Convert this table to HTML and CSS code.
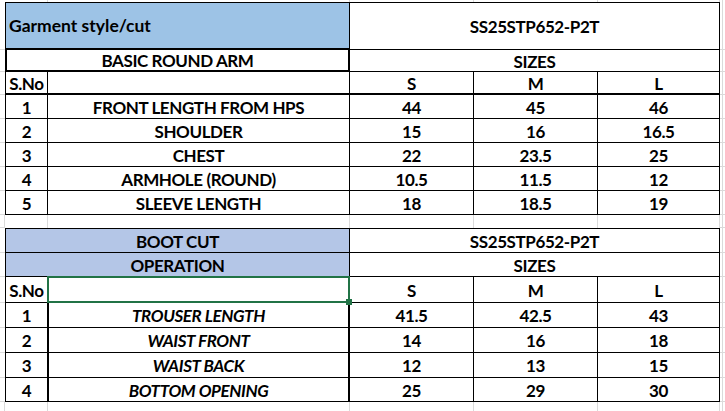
FILE: index.html
```html
<!DOCTYPE html>
<html lang="en">
<head>
<meta charset="utf-8">
<title>Garment spec sheet</title>
<link rel="stylesheet" href="styles.css">
</head>
<body>
<div class="sheet">
  <!-- row 0: top gridline strip -->
  <div class="gut first-row"></div>
  <div class="blank"></div><div class="blank"></div><div class="blank"></div><div class="blank"></div><div class="blank"></div>
  <div class="gut-r first-row"></div>

  <!-- row 1 -->
  <div class="gut"></div>
  <div class="cell span2 first topline hdr thick-b left">Garment style/cut</div>
  <div class="cell span3 topline">SS25STP652-P2T</div>
  <div class="gut-r"></div>

  <!-- row 2 -->
  <div class="gut"></div>
  <div class="cell span2 box">BASIC ROUND ARM</div>
  <div class="cell span3">SIZES</div>
  <div class="gut-r"></div>

  <!-- row 3 -->
  <div class="gut"></div>
  <div class="cell first thick-b">S.No</div>
  <div class="cell thick-b"></div>
  <div class="cell thick-b">S</div>
  <div class="cell thick-b">M</div>
  <div class="cell thick-b">L</div>
  <div class="gut-r"></div>

  <div class="gut"></div>
  <div class="cell first">1</div><div class="cell">FRONT LENGTH FROM HPS</div>
  <div class="cell">44</div><div class="cell">45</div><div class="cell">46</div>
  <div class="gut-r"></div>

  <div class="gut"></div>
  <div class="cell first">2</div><div class="cell">SHOULDER</div>
  <div class="cell">15</div><div class="cell">16</div><div class="cell">16.5</div>
  <div class="gut-r"></div>

  <div class="gut"></div>
  <div class="cell first">3</div><div class="cell">CHEST</div>
  <div class="cell">22</div><div class="cell">23.5</div><div class="cell">25</div>
  <div class="gut-r"></div>

  <div class="gut"></div>
  <div class="cell first">4</div><div class="cell">ARMHOLE (ROUND)</div>
  <div class="cell">10.5</div><div class="cell">11.5</div><div class="cell">12</div>
  <div class="gut-r"></div>

  <div class="gut"></div>
  <div class="cell first">5</div><div class="cell">SLEEVE LENGTH</div>
  <div class="cell">18</div><div class="cell">18.5</div><div class="cell">19</div>
  <div class="gut-r"></div>

  <!-- blank row -->
  <div class="gut vline"></div>
  <div class="blank"></div><div class="blank"></div><div class="blank"></div><div class="blank"></div><div class="blank"></div>
  <div class="gut-r"></div>

  <!-- second table -->
  <div class="gut"></div>
  <div class="cell span2 first topline band">BOOT CUT</div>
  <div class="cell span3 topline">SS25STP652-P2T</div>
  <div class="gut-r"></div>

  <div class="gut"></div>
  <div class="cell span2 first band">OPERATION</div>
  <div class="cell span3">SIZES</div>
  <div class="gut-r"></div>

  <div class="gut"></div>
  <div class="cell first">S.No</div>
  <div class="cell selected"></div>
  <div class="cell">S</div><div class="cell">M</div><div class="cell">L</div>
  <div class="gut-r"></div>

  <div class="gut"></div>
  <div class="cell first">1</div><div class="cell op">TROUSER LENGTH</div>
  <div class="cell">41.5</div><div class="cell">42.5</div><div class="cell">43</div>
  <div class="gut-r"></div>

  <div class="gut"></div>
  <div class="cell first">2</div><div class="cell op">WAIST FRONT</div>
  <div class="cell">14</div><div class="cell">16</div><div class="cell">18</div>
  <div class="gut-r"></div>

  <div class="gut"></div>
  <div class="cell first">3</div><div class="cell op">WAIST BACK</div>
  <div class="cell">12</div><div class="cell">13</div><div class="cell">15</div>
  <div class="gut-r"></div>

  <div class="gut"></div>
  <div class="cell first">4</div><div class="cell op">BOTTOM OPENING</div>
  <div class="cell">25</div><div class="cell">29</div><div class="cell">30</div>
  <div class="gut-r"></div>

  <!-- bottom gridline strip -->
  <div class="gut vline last-row"></div>
  <div class="blank"></div><div class="blank"></div><div class="blank"></div><div class="blank"></div><div class="blank"></div>
  <div class="gut-r last-row"></div>
</div>
</body>
</html>
```

FILE: styles.css
```css
html, body {
  margin: 0;
  padding: 0;
  background: #ffffff;
}

body {
  width: 725px;
  height: 411px;
  overflow: hidden;
  font-family: Lato, "Liberation Sans", sans-serif;
  color: #000000;
}

.sheet {
  display: grid;
  grid-template-columns: 5px 43px 302px 124px 124px 122px 5px;
  grid-template-rows: 2px 48px 22px 23px 24px 24px 24px 24px 24px 13px 25px 24px 26px 25px 25px 25px 24px 9px;
  width: 725px;
  height: 411px;
}

.sheet > div {
  box-sizing: border-box;
  min-width: 0;
}

/* Excel-like gridlines outside the tables */
.gut {
  border-bottom: 1px solid #dadada;
}

.gut.vline {
  border-right: 1px solid #dadada;
}

.gut-r {
  border-bottom: 1px solid #dadada;
  background: linear-gradient(to right, transparent 2px, #dadada 2px, #dadada 3px, transparent 3px);
}

.first-row,
.last-row {
  border-bottom: none;
}

.blank {
  border-right: 1px solid #dadada;
}

/* table cells */
.cell {
  background: #ffffff;
  border-right: 1px solid #000000;
  border-bottom: 1px solid #000000;
  display: flex;
  align-items: center;
  justify-content: center;
  font-weight: 700;
  font-size: 17px;
  letter-spacing: -0.4px;
  line-height: 1;
  white-space: nowrap;
  padding-top: 1px;
}

.span2 { grid-column: span 2; }
.span3 { grid-column: span 3; }

.first { border-left: 1px solid #000000; }
.topline { border-top: 1px solid #000000; }
.thick-b { border-bottom-width: 2px; }

.left {
  justify-content: flex-start;
  padding-left: 3px;
  font-size: 17.5px;
  letter-spacing: 0;
}

.hdr { background: #9dc3e6; }
.band { background: #b4c6e7; }

.box {
  border-left: 2px solid #000000;
  border-right: 2px solid #000000;
  border-bottom: 2px solid #000000;
}

.op {
  font-style: italic;
  border-left: 1px solid #000000;
  border-right-width: 2px;
}

/* active cell selection overlay */
.selected {
  position: relative;
}

.selected::after {
  content: "";
  position: absolute;
  inset: -1px;
  border: 2px solid #217346;
  z-index: 1;
}

.selected::before {
  content: "";
  position: absolute;
  width: 6px;
  height: 6px;
  right: -3px;
  bottom: -3px;
  background: #217346;
  z-index: 2;
}
```
